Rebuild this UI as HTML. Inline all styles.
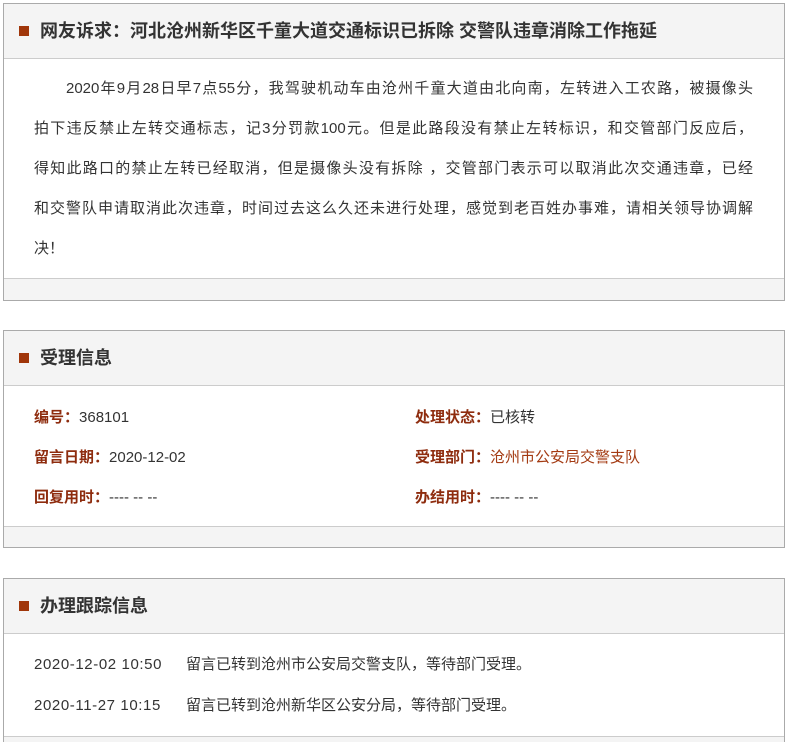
<!DOCTYPE html>
<html><head><meta charset="utf-8"><style>
html,body{margin:0;background:#fff;font-family:"Liberation Sans","Noto Sans CJK SC",sans-serif;color:#333;width:787px;height:742px;overflow:hidden;position:relative}
.box{position:absolute;left:3px;width:780px;border:1px solid #aaa;background:#f4f4f4;box-sizing:content-box}
.hd{height:54px;border-bottom:1px solid #ccc;position:relative}
.hd i{position:absolute;left:15px;top:22px;width:10px;height:10px;background:#a0360a}
.hd b{position:absolute;left:36px;top:0;line-height:54px;font-size:18px;color:#333}
.bd{background:#fff;border-bottom:1px solid #ccc;position:relative}
.t{position:absolute;font-size:15px;white-space:nowrap;line-height:20px}
.l{color:#8e2c0e;font-weight:bold}
.ln{position:absolute;left:30px;width:719px;font-size:15px;line-height:20px;white-space:nowrap;text-align:justify;text-align-last:justify}
</style></head><body>
<div class="box" style="top:3px;height:296px">
 <div class="hd"><i></i><b>网友诉求：河北沧州新华区千童大道交通标识已拆除 交警队违章消除工作拖延</b></div>
 <div class="bd" style="height:219px">
  <div class="ln" style="top:20px;left:62px;width:687px">2020年9月28日早7点55分，我驾驶机动车由沧州千童大道由北向南，左转进入工农路，被摄像头</div>
  <div class="ln" style="top:60px">拍下违反禁止左转交通标志，记3分罚款100元。但是此路段没有禁止左转标识，和交管部门反应后，</div>
  <div class="ln" style="top:100px">得知此路口的禁止左转已经取消，但是摄像头没有拆除 ，交管部门表示可以取消此次交通违章，已经</div>
  <div class="ln" style="top:140px">和交警队申请取消此次违章，时间过去这么久还未进行处理，感觉到老百姓办事难，请相关领导协调解</div>
  <div class="ln" style="top:180px;text-align-last:left">决！</div>
 </div>
</div>
<div class="box" style="top:330px;height:216px">
 <div class="hd"><i></i><b>受理信息</b></div>
 <div class="bd" style="height:140px">
  <div class="t" style="left:30px;top:22px"><span class="l">编号：</span>368101</div>
  <div class="t" style="left:411px;top:22px"><span class="l">处理状态：</span>已核转</div>
  <div class="t" style="left:30px;top:62px"><span class="l">留言日期：</span>2020-12-02</div>
  <div class="t" style="left:411px;top:62px"><span class="l">受理部门：</span><span style="color:#a33a12">沧州市公安局交警支队</span></div>
  <div class="t" style="left:30px;top:102px"><span class="l">回复用时：</span>---- -- --</div>
  <div class="t" style="left:411px;top:102px"><span class="l">办结用时：</span>---- -- --</div>
 </div>
</div>
<div class="box" style="top:578px;height:163px;border-bottom:none">
 <div class="hd"><i></i><b>办理跟踪信息</b></div>
 <div class="bd" style="height:102px">
  <div class="t" style="left:30px;top:21px;letter-spacing:0.6px">2020-12-02 10:50</div>
  <div class="t" style="left:182px;top:21px">留言已转到沧州市公安局交警支队，等待部门受理。</div>
  <div class="t" style="left:30px;top:62px;letter-spacing:0.6px">2020-11-27 10:15</div>
  <div class="t" style="left:182px;top:62px">留言已转到沧州新华区公安分局，等待部门受理。</div>
 </div>
</div>
</body></html>
